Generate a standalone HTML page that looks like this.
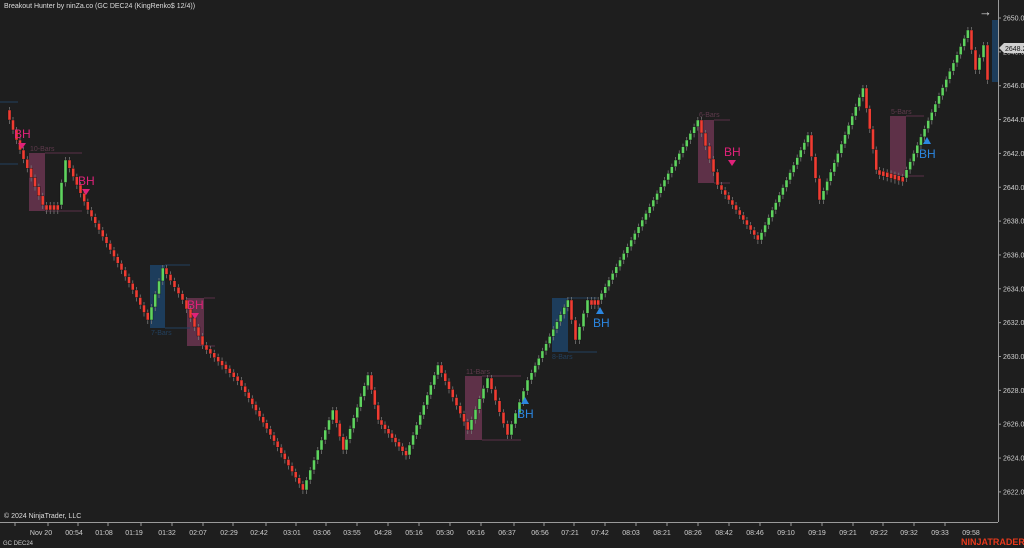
<!DOCTYPE html><html><head><meta charset="utf-8"><style>
body{margin:0;background:#1e1e1e;width:1024px;height:548px;overflow:hidden;font-family:"Liberation Sans",sans-serif}
svg{position:absolute;left:0;top:0}
</style></head><body>
<svg id="s" width="1024" height="548" xmlns="http://www.w3.org/2000/svg" font-family="Liberation Sans, sans-serif">
<rect width="1024" height="548" fill="#1e1e1e"/>
<text x="4" y="8" fill="#ddd" font-size="7">Breakout Hunter by ninZa.co (GC DEC24 (KingRenko$ 12/4))</text>
<text x="979" y="16" fill="#ddd" font-size="13">→</text>
<g id="boxes">
<rect x="29" y="153" width="16" height="58" fill="#6a3550" opacity=".85"/><line x1="45" y1="153" x2="82" y2="153" stroke="#5a3048"/><line x1="45" y1="211" x2="82" y2="211" stroke="#5a3048"/><text x="30" y="151" fill="#5e3a4c" font-size="7">10-Bars</text>
<rect x="187" y="298" width="17" height="48" fill="#6a3550" opacity=".85"/><line x1="204" y1="298" x2="215" y2="298" stroke="#5a3048"/><line x1="204" y1="346" x2="215" y2="346" stroke="#5a3048"/>
<rect x="465" y="376" width="17" height="64" fill="#6a3550" opacity=".85"/><line x1="482" y1="376" x2="521" y2="376" stroke="#5a3048"/><line x1="482" y1="440" x2="521" y2="440" stroke="#5a3048"/><text x="466" y="374" fill="#5e3a4c" font-size="7">11-Bars</text>
<rect x="698" y="120" width="16" height="63" fill="#6a3550" opacity=".85"/><line x1="714" y1="120" x2="730" y2="120" stroke="#5a3048"/><line x1="714" y1="183" x2="730" y2="183" stroke="#5a3048"/><text x="699" y="117" fill="#5e3a4c" font-size="7">6-Bars</text>
<rect x="890" y="116" width="16" height="60" fill="#6a3550" opacity=".85"/><line x1="906" y1="116" x2="924" y2="116" stroke="#5a3048"/><line x1="906" y1="176" x2="924" y2="176" stroke="#5a3048"/><text x="891" y="114" fill="#5e3a4c" font-size="7">5-Bars</text>
<rect x="150" y="265" width="15" height="63" fill="#1d3d5c"/><line x1="165" y1="265" x2="190" y2="265" stroke="#22405e"/><line x1="165" y1="328" x2="190" y2="328" stroke="#22405e"/><text x="151" y="335" fill="#22405e" font-size="7">7-Bars</text>
<rect x="552" y="298" width="16" height="54" fill="#1d3d5c"/><line x1="568" y1="298" x2="597" y2="298" stroke="#22405e"/><line x1="568" y1="352" x2="597" y2="352" stroke="#22405e"/><text x="552" y="359" fill="#22405e" font-size="7">8-Bars</text>
<rect x="992" y="20" width="7" height="62" fill="#1d3d5c"/>
<line x1="0" y1="102" x2="18" y2="102" stroke="#22405e"/><line x1="0" y1="164" x2="18" y2="164" stroke="#22405e"/>
</g>
<g id="c"></g>
<g font-size="12">
<text x="14" y="138" fill="#e0227a">BH</text><path d="M18 143h8l-4 6z" fill="#e0227a"/>
<text x="78" y="185" fill="#e0227a">BH</text><path d="M82 189h8l-4 6z" fill="#e0227a"/>
<text x="187" y="309" fill="#e0227a">BH</text><path d="M191 313h8l-4 6z" fill="#e0227a"/>
<text x="724" y="156" fill="#e0227a">BH</text><path d="M728 160h8l-4 6z" fill="#e0227a"/>
<text x="517" y="418" fill="#2b86e0">BH</text><path d="M521 404h8l-4 -7z" fill="#2b86e0"/>
<text x="593" y="327" fill="#2b86e0">BH</text><path d="M596 314h8l-4 -7z" fill="#2b86e0"/>
<text x="919" y="158" fill="#2b86e0">BH</text><path d="M923 144h8l-4 -7z" fill="#2b86e0"/>
</g>
<line x1="998.5" y1="0" x2="998.5" y2="522" stroke="#9a9a9a"/>
<line x1="0" y1="522.5" x2="998" y2="522.5" stroke="#9a9a9a"/>
<g id="ax" fill="#cfcfcf" font-size="7"></g>
<path d="M999 48l5-5h20v10h-20z" fill="#d0d0d0"/><text x="1005" y="51" font-size="7" fill="#111">2648.2</text>
<text x="4" y="518" fill="#ddd" font-size="7">© 2024 NinjaTrader, LLC</text>
<text x="3" y="545" fill="#ccc" font-size="6">GC DEC24</text>
<text x="961" y="545" fill="#e8391c" font-size="9" font-weight="bold">NINJATRADER</text>
</svg>
<script>
(function(){
var ax=document.getElementById('ax'),c=document.getElementById('c'),h='';
for(var p=2650,y=18;p>=2622;p-=2,y+=33.85){h+='<text x="1003" y="'+(y+2.5)+'">'+p+'.0</text><line x1="998" y1="'+y+'" x2="1001" y2="'+y+'" stroke="#999"/>';}
var T=[[41,'Nov 20'],[74,'00:54'],[104,'01:08'],[134,'01:19'],[167,'01:32'],[198,'02:07'],[229,'02:29'],[259,'02:42'],[292,'03:01'],[322,'03:06'],[352,'03:55'],[383,'04:28'],[414,'05:16'],[445,'05:30'],[476,'06:16'],[507,'06:37'],[540,'06:56'],[570,'07:21'],[600,'07:42'],[631,'08:03'],[662,'08:21'],[693,'08:26'],[724,'08:42'],[755,'08:46'],[786,'09:10'],[817,'09:19'],[848,'09:21'],[879,'09:22'],[909,'09:32'],[940,'09:33'],[971,'09:58']];
T.forEach(function(t){h+='<text x="'+t[0]+'" y="535" text-anchor="middle">'+t[1]+'</text><line x1="'+(t[0]-26)+'" y1="523" x2="'+(t[0]-26)+'" y2="526" stroke="#999"/>';});
ax.innerHTML=h;
var W=[[8,110],[22,150],[45,205],[60,205],[68,160],[90,210],[135,290],[150,320],[165,268],[185,300],[205,345],[240,380],[305,490],[335,410],[345,450],[370,375],[380,420],[408,455],[440,365],[470,430],[490,378],[510,435],[530,380],[570,300],[578,340],[590,300],[600,300],[700,120],[720,185],[760,240],[810,135],[822,200],[865,88],[878,170],[905,178],[970,30],[978,70],[986,45],[990,80]];
var g='';
for(var i=0;i<W.length-1;i++){var a=W[i],b=W[i+1],n=Math.max(1,Math.round((b[0]-a[0])/3.7));
for(var k=0;k<n;k++){var x=a[0]+(b[0]-a[0])*k/n,y0=a[1]+(b[1]-a[1])*k/n,y2=a[1]+(b[1]-a[1])*(k+1)/n;
var up=y2<y0,tp=Math.min(y0,y2),ht=Math.max(5,Math.abs(y2-y0));
g+='<line x1="'+(x+1.5)+'" y1="'+(tp-3)+'" x2="'+(x+1.5)+'" y2="'+(tp+ht+4)+'" stroke="#777" stroke-width=".8"/><rect x="'+x+'" y="'+tp+'" width="3" height="'+ht+'" fill="'+(up?'#5fd35f':'#f03c32')+'" stroke="#111" stroke-width=".4"/>';}}
c.innerHTML=g;
})();
</script>
</body></html>
